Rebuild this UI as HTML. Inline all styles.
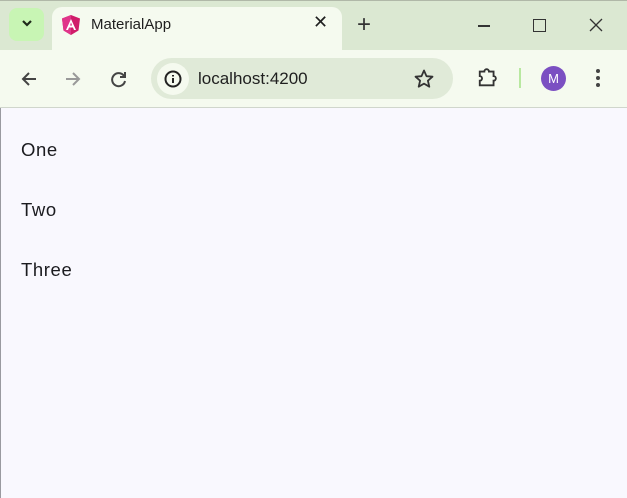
<!DOCTYPE html>
<html><head><style>
body{margin:0;width:627px;height:498px;overflow:hidden;background:#dbe8d2;font-family:"Liberation Sans",sans-serif;position:relative}
.a{position:absolute}
</style></head><body>
<div class="a" style="left:0;top:0;width:627px;height:1px;background:#b0b8a8"></div>
<div class="a" style="left:9px;top:8px;width:35px;height:33px;border-radius:8px;background:#c8f5b4"></div>
<svg class="a" style="left:20px;top:18px" width="14" height="12"><path d="M3 3l4 4 4-4" stroke="#1f2a1a" stroke-width="2.2" fill="none"/></svg>
<div class="a" style="left:52px;top:7px;width:290px;height:45px;border-radius:10px 10px 0 0;background:#f5faef"></div>
<svg class="a" style="left:60px;top:14px" width="22" height="22" viewBox="0 0 22 22"><path d="M11 1L2 4.5l1.5 12L11 21l7.5-4.5L20 4.5z" fill="#d01c6a"/><path d="M11 1L2 4.5l1.5 12L11 21z" fill="#e0348a"/><path d="M11 5l-5 11h2l1-2.5h4l1 2.5h2zM10 11.5l1-3 1 3z" fill="#fff"/></svg>
<div class="a" style="left:91px;top:16px;font-size:15px;color:#1f1f1f">MaterialApp</div>
<div class="a" style="left:313px;top:12px;font-size:18px;color:#1f1f1f">✕</div>
<div class="a" style="left:357px;top:11px;font-size:24px;color:#333">+</div>
<div class="a" style="left:478px;top:25px;width:12px;height:1.5px;background:#333"></div>
<div class="a" style="left:533px;top:19px;width:11px;height:11px;border:1.3px solid #333"></div>
<svg class="a" style="left:589px;top:18px" width="14" height="14"><path d="M1 1l12 12M13 1L1 13" stroke="#333" stroke-width="1.3"/></svg>
<div class="a" style="left:0;top:50px;width:627px;height:58px;background:#f5faef"></div>
<svg class="a" style="left:18px;top:68px" width="22" height="22"><path d="M18 11H5M11 5l-6 6 6 6" stroke="#444" stroke-width="2" fill="none"/></svg>
<svg class="a" style="left:62px;top:68px" width="22" height="22"><path d="M4 11h13M11 5l6 6-6 6" stroke="#999" stroke-width="2" fill="none"/></svg>
<svg class="a" style="left:108px;top:68px" width="22" height="22"><path d="M16 8a6.5 6.5 0 1 0 1 5" stroke="#444" stroke-width="2" fill="none"/><path d="M17 4v5h-5" stroke="#444" stroke-width="2" fill="none"/></svg>
<div class="a" style="left:151px;top:58px;width:302px;height:41px;border-radius:21px;background:#e0ead8"></div>
<div class="a" style="left:157px;top:63px;width:32px;height:32px;border-radius:16px;background:#f5faef"></div>
<svg class="a" style="left:163px;top:69px" width="20" height="20"><circle cx="10" cy="10" r="7.5" stroke="#222" stroke-width="2" fill="none"/><path d="M10 9v5M10 6v1.5" stroke="#222" stroke-width="2"/></svg>
<div class="a" style="left:198px;top:69px;font-size:17px;color:#1f1f1f">localhost:4200</div>
<svg class="a" style="left:413px;top:68px" width="22" height="22"><path d="M11 2.5l2.5 5.7 6 .5-4.6 4 1.4 6L11 15.6 5.7 18.7l1.4-6-4.6-4 6-.5z" stroke="#333" stroke-width="1.8" fill="none" stroke-linejoin="round"/></svg>
<svg class="a" style="left:476px;top:67px" width="24" height="24"><path d="M3 6h5a2.5 2.5 0 0 1 5 0h5v5a2.5 2.5 0 0 1 0 5v5H3v-5a2.5 2.5 0 0 0 0-5z" transform="translate(1 -1) scale(.92)" stroke="#333" stroke-width="2" fill="none"/></svg>
<div class="a" style="left:519px;top:68px;width:2px;height:20px;background:#b8e8a0"></div>
<div class="a" style="left:541px;top:66px;width:25px;height:25px;border-radius:13px;background:#7b4fc2;color:#fff;font-size:13px;text-align:center;line-height:25px">M</div>
<div class="a" style="left:596px;top:69px;width:4px;height:4px;border-radius:2px;background:#444;box-shadow:0 7px 0 #444,0 14px 0 #444"></div>
<div class="a" style="left:0;top:107px;width:627px;height:1px;background:#d0d6cc"></div>
<div class="a" style="left:1px;top:108px;width:626px;height:390px;background:#f9f8fe"></div>
<div class="a" style="left:0;top:108px;width:1px;height:390px;background:#9a9aa0"></div>
<div class="a" style="left:21px;top:139px;font-size:18.5px;letter-spacing:0.6px;color:#1b1b1f">One</div>
<div class="a" style="left:21px;top:199px;font-size:18.5px;letter-spacing:0.6px;color:#1b1b1f">Two</div>
<div class="a" style="left:21px;top:259px;font-size:18.5px;letter-spacing:0.6px;color:#1b1b1f">Three</div>
</body></html>
